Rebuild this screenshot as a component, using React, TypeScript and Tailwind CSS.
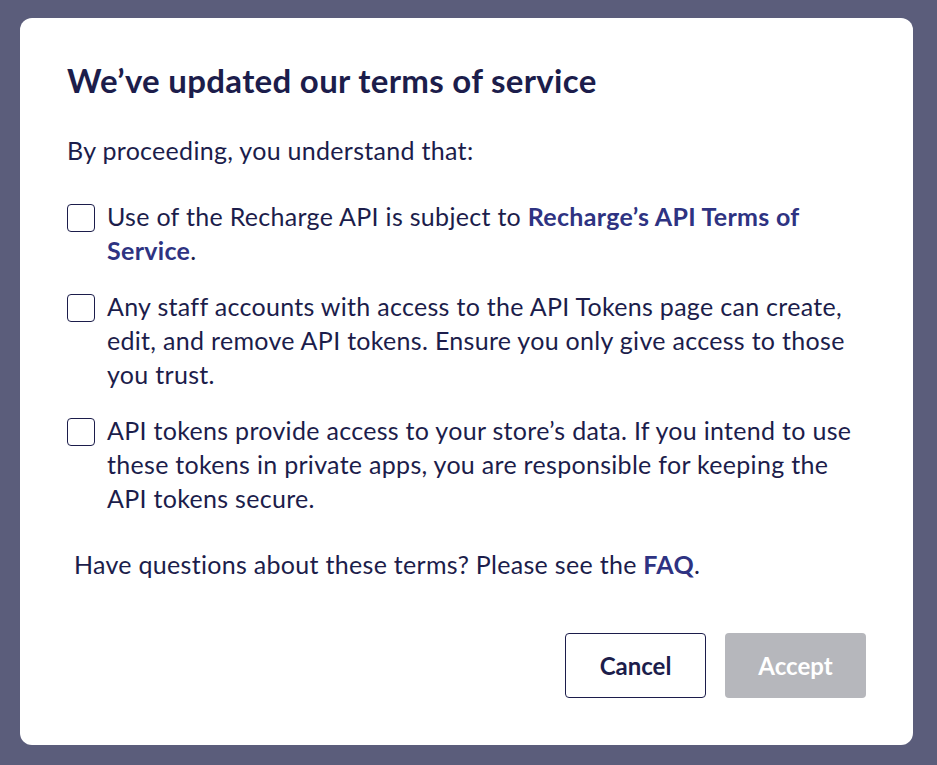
import React from "react";

const terms = [
  {
    id: "api",
    body: (
      <>
        Use of the Recharge API is subject to{" "}
        <a href="#" className="font-bold text-[#2e3382]">
          Recharge’s API Terms of Service
        </a>
        .
      </>
    ),
  },
  {
    id: "staff",
    body: (
      <>
        Any staff accounts with access to the API Tokens page can create, edit, and remove API tokens. Ensure you only
        give access to those you trust.
      </>
    ),
  },
  {
    id: "data",
    body: (
      <>
        API tokens provide access to your store’s data. If you intend to use these tokens in private apps, you are
        responsible for keeping the API tokens secure.
      </>
    ),
  },
];

export default function App() {
  return (
    <div className="flex h-[765px] w-full bg-[#5b5d7b] pb-[20px] pl-[20px] pr-[24px] pt-[18px] font-['Lato',sans-serif] text-[#1c1d4b]">
      <div className="flex flex-1 flex-col rounded-[12px] bg-white px-[47px] pb-[47px] pt-[44px]">
        <h2 className="text-[33px] font-bold leading-[36px] tracking-[0.3px]">We’ve updated our terms of service</h2>

        <p className="mt-[35px] text-[25px] leading-[34px] tracking-[0.3px]">By proceeding, you understand that:</p>

        <div className="mt-[32px] flex flex-col gap-[22px]">
          {terms.map((t) => (
            <label key={t.id} className="flex items-start gap-[12px] text-[25px] leading-[34px] tracking-[0.3px]">
              <input
                type="checkbox"
                className="mt-[5px] h-[28px] w-[28px] shrink-0 appearance-none rounded-[4px] border-[1.5px] border-[#1c1d4b] bg-white"
              />
              <span>{t.body}</span>
            </label>
          ))}
        </div>

        <p className="mt-[32px] pl-[7px] text-[25px] leading-[34px] tracking-[0.3px]">
          Have questions about these terms? Please see the{" "}
          <a href="#" className="font-bold text-[#2e3382]">
            FAQ
          </a>
          .
        </p>

        <div className="mt-auto flex justify-end gap-[19px]">
          <button className="h-[65px] w-[141px] rounded-[4px] border-[1.5px] border-[#1c1d4b] bg-white text-[24px] font-bold text-[#1c1d4b]">
            Cancel
          </button>
          <button disabled className="h-[65px] w-[141px] rounded-[4px] bg-[#b6b7bc] text-[24px] font-bold text-white">
            Accept
          </button>
        </div>
      </div>
    </div>
  );
}
